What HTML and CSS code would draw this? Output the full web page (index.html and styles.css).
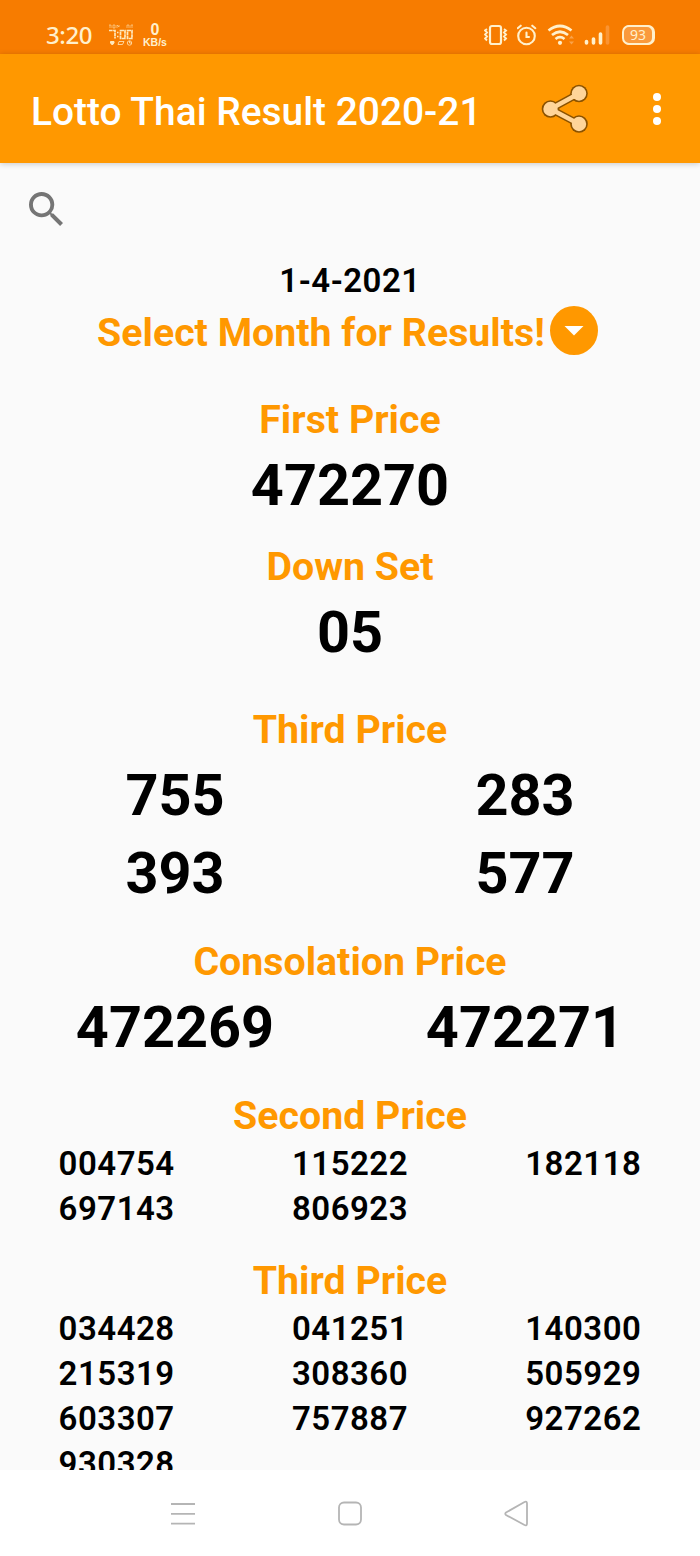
FILE: index.html
```html
<!DOCTYPE html>
<html lang="en">
<head>
    <meta charset="UTF-8">
    <title>Lotto Thai Result 2020-21</title>
    <link rel="stylesheet" href="styles.css">
</head>
<body>
    <div class="status-bar">
        <span class="clock">3:20</span>
        <svg class="clock-app" width="24" height="22" viewBox="0 0 24 22" fill="none" stroke="#ffe9bd">
            <path d="M0 4V1h2v3M4 1v3h2V1zM8 4V1l2 2V1M18 4V1h2v3M22 4V1h2v3" stroke-width=".8" opacity=".7"/>
            <path d="M0 6.500h6v8M11.500 6.500h4.500v8h-4.500zM18.500 6.500h4.500v8h-4.500z" stroke-width="1.700" stroke-dasharray="3.600 .5"/>
            <path d="M8 8.500h1.500M8 12.500h1.500" stroke-width="1.500"/>
            <path d="M1.500 17.500h3.500v1.500l-1.700 2-1.800-2z" fill="#ffe9bd"/>
            <path d="M10 17.500h5l-1.500 3H9z" stroke-width=".8"/>
            <circle cx="20.500" cy="19" r="2.200" stroke-width=".8"/>
            <path d="M20.500 17v2h2" stroke-width=".8"/>
        </svg>
        <div class="speed"><b>0</b><span>KB/s</span></div>
        <div class="status-icons">
            <svg width="24" height="22" viewBox="0 0 24 22" fill="none" stroke="#fff0cc">
                <rect x="6" y="2" width="11" height="18" rx="2" stroke-width="2.200"/>
                <path d="M3 5l-2 1.500 2 2-2 2 2 2-2 2 2 2M20 5l2 1.500-2 2 2 2-2 2 2 2-2 2" stroke-width="1.900"/>
            </svg>
            <svg width="20" height="22" viewBox="0 0 20 22" fill="none" stroke="#fff0cc" stroke-width="2.100" stroke-linecap="round">
                <circle cx="9.500" cy="12" r="8.300"/>
                <path d="M.7 4.200l3-2.500M18.300 4.200l-3-2.500M9.500 8.500V13H12"/>
            </svg>
            <svg width="28" height="22" viewBox="-1.500 0 28 22" fill="none" stroke="#fff0cc" stroke-width="2.700">
                <path d="M1 6.500Q12.500 -2.500 24 6.500M4.500 11q8-6.500 16 0M8 15q4.500-3.600 9 0"/>
                <circle cx="12.500" cy="18.800" r="2.100" fill="#fff0cc" stroke="none"/>
                <path d="M21.500 14.500l2.500-3 2.500 3zM21.500 17.500h5l-2.500 3z" fill="#faa34a" stroke="none"/>
            </svg>
            <svg width="27" height="22" viewBox="0 0 27 22" fill="none" stroke="#fff0cc" stroke-width="3.600" stroke-linecap="round">
                <path d="M3.500 17.500v1.500M10.500 15v4M17.500 10v9"/>
                <path d="M24.500 3v16" stroke="#fa9433"/>
            </svg>
            <div class="battery">93</div>
        </div>
    </div>

    <div class="toolbar">
        <h1>Lotto Thai Result 2020-21</h1>
        <svg class="share" width="48" height="50" viewBox="0 0 48 50">
            <g fill="#8a5200">
                <circle cx="9.500" cy="25" r="8.800"/>
                <circle cx="38" cy="9.500" r="8.800"/>
                <circle cx="38" cy="40" r="8.800"/>
            </g>
            <path d="M38 9.500L9.500 25 38 40" fill="none" stroke="#8a5200" stroke-width="7.400"/>
            <path d="M38 9.500L9.500 25 38 40" fill="none" stroke="#ffd599" stroke-width="4.400"/>
            <g fill="#ffd599">
                <circle cx="9.500" cy="25" r="7.200"/>
                <circle cx="38" cy="9.500" r="7.200"/>
                <circle cx="38" cy="40" r="7.200"/>
            </g>
        </svg>
        <div class="menu"><i></i><i></i><i></i></div>
    </div>

    <main>
        <div class="search">
            <svg width="34" height="34" viewBox="3 3 17.490 17.490" fill="#757575">
                <path d="M15.500 14h-.790l-.280-.270A6.470 6.470 0 0 0 16 9.500 6.500 6.500 0 1 0 9.500 16c1.610 0 3.090-.590 4.230-1.570l.270.280v.790l5 4.990L20.490 19l-4.990-5zm-6 0C7.010 14 5 11.990 5 9.500S7.010 5 9.500 5 14 7.010 14 9.500 11.990 14 9.500 14z"/>
            </svg>
        </div>
        <p class="date">1-4-2021</p>
        <div class="select-month">
            <span>Select Month for Results!</span>
            <svg width="48" height="49" viewBox="0 0 48 49">
                <ellipse cx="24" cy="24.500" rx="24" ry="24.500" fill="#ff9800"/>
                <path d="M14.500 20h19L24 29.500z" fill="#fff"/>
            </svg>
        </div>

        <section class="first">
            <h2>First Price</h2>
            <div class="big">472270</div>
        </section>
        <section class="down">
            <h2>Down Set</h2>
            <div class="big">05</div>
        </section>
        <section class="third">
            <h2>Third Price</h2>
            <div class="big two">
                <span>755</span><span>283</span>
                <span>393</span><span>577</span>
            </div>
        </section>
        <section>
            <h2>Consolation Price</h2>
            <div class="big two">
                <span>472269</span><span>472271</span>
            </div>
        </section>
        <section>
            <h2>Second Price</h2>
            <div class="small">
                <span>004754</span><span>115222</span><span>182118</span>
                <span>697143</span><span>806923</span>
            </div>
        </section>
        <section>
            <h2>Third Price</h2>
            <div class="small">
                <span>034428</span><span>041251</span><span>140300</span>
                <span>215319</span><span>308360</span><span>505929</span>
                <span>603307</span><span>757887</span><span>927262</span>
                <span>930328</span>
            </div>
        </section>
    </main>

    <nav>
        <svg width="26" height="28" viewBox="0 0 26 28"><path d="M1 4h24M1 13.800h24M1 23.600h24"/></svg>
        <svg width="26" height="28" viewBox="0 0 26 28"><rect x="2" y="2.500" width="22" height="22" rx="5"/></svg>
        <svg width="26" height="28" viewBox="0 0 26 28"><path d="M2 12.500L20.500 2q2.500-1 2.500 1.500v20q0 2.500-2.500 1.500L2 15q-1.500-1.200 0-2.500z"/></svg>
    </nav>
</body>
</html>
```

FILE: styles.css
```css
* {
    box-sizing: border-box;
}
body {
    margin: 0;
    height: 1556px;
    display: flex;
    flex-direction: column;
    overflow: hidden;
    font-family: Roboto, sans-serif;
    background: #fafafa;
    color: #000;
}
h1, h2, p {
    margin: 0;
}
svg {
    display: block;
    flex: none;
}
.status-bar {
    height: 54px;
    flex: none;
    display: flex;
    align-items: center;
    padding: 16px 46px 0 46px;
    background: #f77c00;
    color: #fff0cc;
}
.clock {
    width: 63px;
    font: 500 24px/34px "Noto Sans", sans-serif;
    letter-spacing: -0.4px;
}
.speed {
    width: 26px;
    margin-left: 9px;
    display: flex;
    flex-direction: column;
    align-items: center;
    font: bold 10.5px/11px "Liberation Sans", sans-serif;
}
.speed b {
    font-size: 16px;
    line-height: 14px;
}
.status-icons {
    margin-left: auto;
    display: flex;
    align-items: center;
    gap: 9px;
}
.battery {
    width: 32px;
    height: 20px;
    margin-left: 3px;
    border: 2px solid #fff0cc;
    border-radius: 7px;
    background: #fa9a3c;
    font: 14px/16px "Noto Sans", sans-serif;
    text-align: center;
    box-shadow: 1px 0 0 #fff0cc;
}
.toolbar {
    height: 109px;
    flex: none;
    display: flex;
    align-items: center;
    padding: 0 39px 0 31px;
    background: #ff9800;
    box-shadow: 0 1px 6px rgba(0, 0, 0, 0.2);
    z-index: 1;
}
.toolbar h1 {
    flex: 1;
    color: #fff;
    font-size: 38.9px;
    font-weight: 500;
    line-height: 50px;
    white-space: nowrap;
    padding-top: 6px;
}
.share {
    margin-right: 64px;
}
.menu {
    display: flex;
    flex-direction: column;
    gap: 4px;
}
.menu i {
    width: 8px;
    height: 8px;
    border-radius: 50%;
    background: #fff;
}
main {
    flex: 1;
    min-height: 0;
    overflow: hidden;
}
.search {
    height: 95px;
    padding: 29px 29px 0;
}
.date {
    height: 48px;
    font-size: 33px;
    font-weight: 600;
    line-height: 46px;
    letter-spacing: 0.5px;
    text-align: center;
}
.select-month {
    display: flex;
    justify-content: center;
    align-items: center;
    gap: 5px;
    height: 49px;
    padding-right: 5px;
    color: #ff9800;
    font-size: 39.3px;
    font-weight: bold;
    white-space: nowrap;
}
.select-month span {
    padding-top: 4px;
}
section {
    margin-top: 22px;
    text-align: center;
}
.first {
    margin-top: 38px;
}
.down {
    margin-top: 15px;
}
.third {
    margin-top: 31px;
}
h2 {
    color: #ff9800;
    font-size: 39.3px;
    font-weight: bold;
    line-height: 54px;
}
.big {
    font-size: 57.6px;
    font-weight: bold;
    line-height: 78px;
}
.two {
    display: grid;
    grid-template-columns: 1fr 1fr;
}
.small {
    display: grid;
    grid-template-columns: repeat(3, 1fr);
    padding-bottom: 1px;
    margin-top: -1px;
    font-size: 33px;
    font-weight: 600;
    line-height: 44.7px;
    letter-spacing: 0.5px;
}
nav {
    height: 86px;
    flex: none;
    display: flex;
    justify-content: center;
    align-items: center;
    gap: 141px;
    padding-top: 2px;
    background: #fff;
    z-index: 1;
}
nav svg {
    fill: none;
    stroke: #b5b5b5;
    stroke-width: 1.8;
}
```
